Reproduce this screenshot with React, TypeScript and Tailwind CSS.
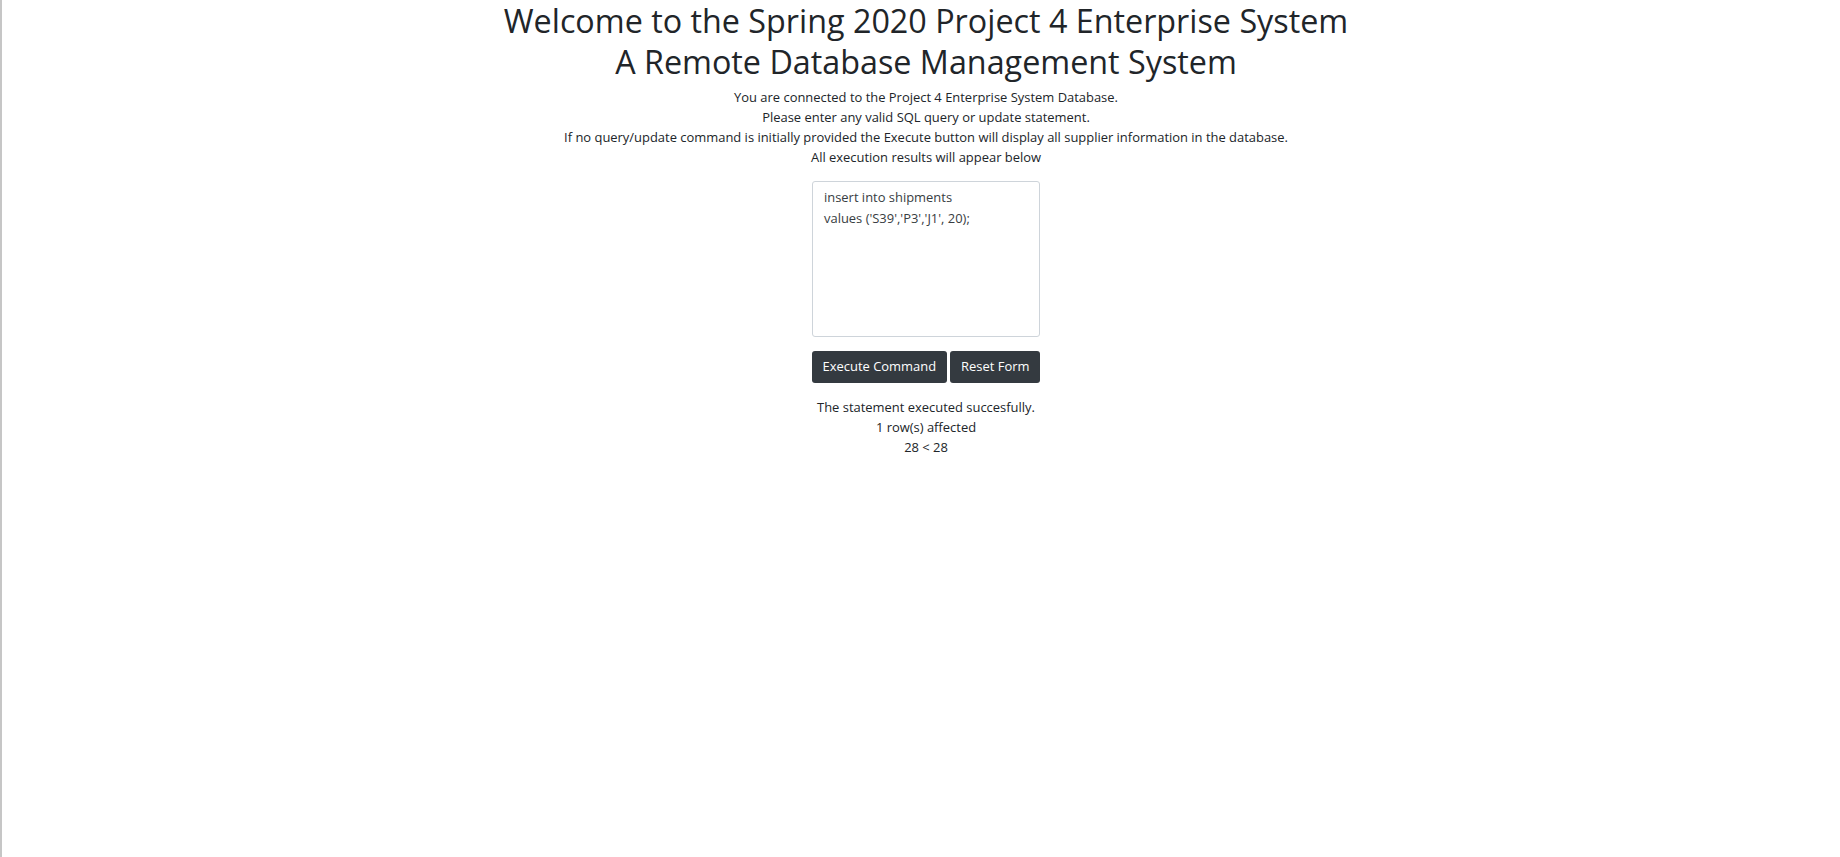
import { useState } from "react";

const FONT = "font-['Open_Sans',_'Noto_Sans',_sans-serif]";

export default function App() {
  const [sql, setSql] = useState("insert into shipments\nvalues ('S39','P3','J1', 20);");

  return (
    <div className={`min-h-[857px] border-l-2 border-[#c6c6c6] bg-white pl-[10px] text-[#212529] ${FONT}`}>
      <div className="flex flex-col items-center text-center">
        <h1 className="text-[32.3px] font-normal leading-[41px]">
          <div>Welcome to the Spring 2020 Project 4 Enterprise System</div>
          <div>A Remote Database Management System</div>
        </h1>
        <div className="mt-[5px] text-[12.95px] leading-[20px]">
          <p>You are connected to the Project 4 Enterprise System Database.</p>
          <p>Please enter any valid SQL query or update statement.</p>
          <p>
            If no query/update command is initially provided the Execute button will display all supplier
            information in the database.
          </p>
          <p>All execution results will appear below</p>
        </div>

        <form className="mt-[14px] flex flex-col items-center" onSubmit={(e) => e.preventDefault()}>
          <textarea
            value={sql}
            onChange={(e) => setSql(e.target.value)}
            className="h-[156px] w-[228px] resize-none rounded-[3px] border border-[#ced4da] px-[11px] pt-[5px] pb-[6px] text-[12.95px] leading-[21px] text-[#383d42] outline-none"
          />
          <div className="mt-[14px] flex gap-[3px]">
            <button
              type="submit"
              className="h-[32px] rounded-[3px] bg-[#343a40] px-[11px] text-[12.95px] text-white"
            >
              Execute Command
            </button>
            <button
              type="button"
              onClick={() => setSql("")}
              className="h-[32px] rounded-[3px] bg-[#343a40] px-[11px] text-[12.95px] text-white"
            >
              Reset Form
            </button>
          </div>
        </form>

        <div className="mt-[14px] text-[12.95px] leading-[20px]">
          <p>The statement executed succesfully.</p>
          <p>1 row(s) affected</p>
          <p>28 &lt; 28</p>
        </div>
      </div>
    </div>
  );
}
